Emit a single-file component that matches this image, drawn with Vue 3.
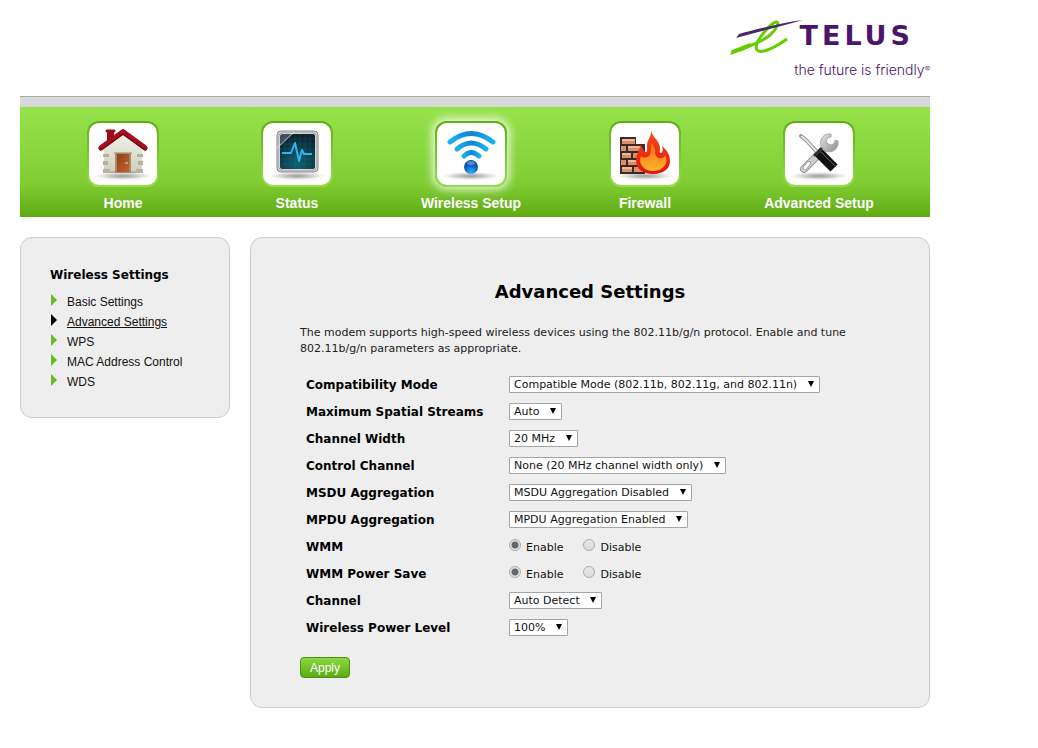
<script setup>
import { ref } from 'vue';

const onglets = [
  { id: 'home', label: 'Home' },
  { id: 'status', label: 'Status' },
  { id: 'wireless', label: 'Wireless Setup' },
  { id: 'firewall', label: 'Firewall' },
  { id: 'advanced', label: 'Advanced Setup' }
];
const ongletActif = ref('wireless');

const liens = ['Basic Settings', 'Advanced Settings', 'WPS', 'MAC Address Control', 'WDS'];
const lienActif = ref('Advanced Settings');

const champs = ref([
  { id: 'mode', label: 'Compatibility Mode', type: 'select', value: 'Compatible Mode (802.11b, 802.11g, and 802.11n)' },
  { id: 'streams', label: 'Maximum Spatial Streams', type: 'select', value: 'Auto' },
  { id: 'width', label: 'Channel Width', type: 'select', value: '20 MHz' },
  { id: 'control', label: 'Control Channel', type: 'select', value: 'None (20 MHz channel width only)' },
  { id: 'msdu', label: 'MSDU Aggregation', type: 'select', value: 'MSDU Aggregation Disabled' },
  { id: 'mpdu', label: 'MPDU Aggregation', type: 'select', value: 'MPDU Aggregation Enabled' },
  { id: 'wmm', label: 'WMM', type: 'radio', value: 'Enable' },
  { id: 'wmmps', label: 'WMM Power Save', type: 'radio', value: 'Enable' },
  { id: 'channel', label: 'Channel', type: 'select', value: 'Auto Detect' },
  { id: 'power', label: 'Wireless Power Level', type: 'select', value: '100%' }
]);
</script>

<template>
  <div class="page">
    <header class="header">
      <div class="logo">
        <div class="logo-top">
          <svg class="swoosh" viewBox="0 0 74 36" aria-hidden="true">
            <path d="M2 32 C18 27 32 22 40 15 C47 9 50 1 46 2 C41 3 31 15 28 21 C24 29 27 33 34 31 C43 29 50 24 57 19" fill="none" stroke="#66cc00" stroke-width="3" />
            <path d="M0 35 L2 30 L20 23 L22 26 C16 30 8 32 0 35Z" fill="#66cc00" />
            <path d="M9 14 C28 9 50 3 73 0 C52 6 28 12 6 18Z" fill="#4b286d" />
          </svg>
          <span class="logo-name">TELUS</span>
        </div>
        <span class="tagline">the future is friendly<span class="mark">®</span></span>
      </div>
    </header>

    <nav class="nav">
      <a v-for="o in onglets" :key="o.id" href="#" class="tab" @click.prevent="ongletActif = o.id">
        <span class="tile" :class="{ active: ongletActif === o.id }">
          <svg viewBox="0 0 68 62" aria-hidden="true">
            <defs>
              <radialGradient :id="'shadow-' + o.id">
                <stop offset="0" stop-color="#999" />
                <stop offset="0.5" stop-color="#999" stop-opacity="0.5" />
                <stop offset="1" stop-color="#999" stop-opacity="0" />
              </radialGradient>
            </defs>
            <ellipse cx="34" cy="53" rx="28" ry="4" :fill="'url(#shadow-' + o.id + ')'" />

            <g v-if="o.id === 'home'">
              <defs>
                <linearGradient id="wall" x1="0" y1="0" x2="0" y2="1">
                  <stop offset="0" stop-color="#f2f2ea" />
                  <stop offset="1" stop-color="#cfcfbd" />
                </linearGradient>
                <linearGradient id="door" x1="0" y1="0" x2="1" y2="1">
                  <stop offset="0" stop-color="#8f3f1c" />
                  <stop offset="1" stop-color="#c0622f" />
                </linearGradient>
              </defs>
              <path d="M18 7h7v11l-7 5z" fill="#9a0a19" />
              <path d="M18 8h7" stroke="#a00b1c" stroke-width="3" stroke-linecap="round" />
              <path d="M15 23 L34 9 L53 23 V50 H15Z" fill="url(#wall)" />
              <g fill="#b5b39a">
                <path d="M14 31h6v3h-6zM14 38h5v4h-5zM14 46h7v4h-7zM48 31h6v3h-6zM49 38h5v4h-5zM47 46h7v4h-7z" />
                <path d="M14 48h40v2H14zM25 29h18v2H25z" />
              </g>
              <path d="M26 30h16v20H26z" fill="#a88a64" />
              <path d="M28 31h12v18H28z" fill="url(#door)" />
              <path d="M36 40h3" stroke="#ffd98a" />
              <path d="M12 25 L34 9 L56 25" fill="none" stroke="#6e0712" stroke-width="5" stroke-linecap="round" stroke-linejoin="round" />
              <path d="M12 24 L34 8 L56 24" fill="none" stroke="#a80c1e" stroke-width="4" stroke-linecap="round" stroke-linejoin="round" />
            </g>

            <g v-else-if="o.id === 'status'">
              <defs>
                <radialGradient id="screen" cx="0.5" cy="0.85" r="0.8">
                  <stop offset="0" stop-color="#0e6272" />
                  <stop offset="1" stop-color="#0b2533" />
                </radialGradient>
              </defs>
              <rect x="14" y="8" width="41" height="41" rx="4" fill="#cfcfd2" stroke="#88888c" />
              <rect x="16" y="10" width="37" height="37" rx="3" fill="#fff" stroke="#a5a5aa" />
              <rect x="17" y="11" width="35" height="35" rx="2" fill="url(#screen)" />
              <path d="M22 11v35M27 11v35M32 11v35M37 11v35M42 11v35M47 11v35M17 16h35M17 21h35M17 26h35M17 31h35M17 36h35M17 41h35" stroke="#3b8b9b" stroke-opacity="0.15" />
              <path d="M17 11h13L17 23z" fill="#fff" fill-opacity="0.2" />
              <path d="M14 25L31 9" stroke="#fff" stroke-opacity="0.6" />
              <path d="M19 30h9l4-10 4 18 3-11 2 4h8" fill="none" stroke="#31b4ec" stroke-width="2" stroke-linejoin="round" />
            </g>

            <g v-else-if="o.id === 'wireless'">
              <defs>
                <linearGradient id="wave" x1="0" y1="0" x2="1" y2="0">
                  <stop offset="0" stop-color="#1cb1f2" />
                  <stop offset="0.5" stop-color="#0d83d6" />
                  <stop offset="1" stop-color="#1cb1f2" />
                </linearGradient>
                <radialGradient id="ball" cx="0.5" cy="0.9" r="0.9">
                  <stop offset="0" stop-color="#29b6f6" />
                  <stop offset="0.6" stop-color="#0a5cbe" />
                  <stop offset="1" stop-color="#07459e" />
                </radialGradient>
              </defs>
              <g fill="none" stroke="url(#wave)" stroke-width="5" stroke-linecap="round">
                <path d="M13 19 Q34 2 56 19" />
                <path d="M20 26 Q34 14 49 26" />
                <path d="M27 33 Q34 26 42 33" />
              </g>
              <circle cx="34" cy="44" r="7" fill="url(#ball)" />
              <ellipse cx="34" cy="40" rx="4" ry="2" fill="#fff" fill-opacity="0.3" />
            </g>

            <g v-else-if="o.id === 'firewall'">
              <defs>
                <linearGradient id="flame" x1="0" y1="0" x2="0" y2="1">
                  <stop offset="0" stop-color="#f5501e" />
                  <stop offset="1" stop-color="#e5120c" />
                </linearGradient>
                <linearGradient id="core" x1="0" y1="0" x2="0" y2="1">
                  <stop offset="0" stop-color="#ff6a13" />
                  <stop offset="1" stop-color="#ffb52c" />
                </linearGradient>
              </defs>
              <path d="M9 14h16v7h9v30H9z" fill="#3d2a24" />
              <g fill="#d98e6c">
                <path d="M11 16h13v5H11zM10 23h5v5h-5zM17 23h13v5H17zM11 30h9v5h-9zM22 30h9v5h-9zM10 37h5v5h-5zM17 37h13v5H17zM11 44h10v5H11zM23 44h9v5h-9z" />
              </g>
              <path d="M11 16h13v2H11zM17 23h13v2H17zM11 30h9v2h-9zM17 37h10v2H17zM11 44h10v2H11z" fill="#efb698" />
              <path d="M40 7 C41 14 49 18 49 25 C49 28 48 30 50 30 C52 30 52 26 51 23 C56 27 59 32 59 38 C59 46 52 51 42 51 C32 51 25 46 25 37 C25 31 29 28 29 22 C32 24 32 28 34 29 C37 30 36 26 36 23 C36 16 41 14 40 7Z" fill="url(#flame)" />
              <path d="M41 20 C43 24 44 25 44 29 C44 33 47 36 51 35 C54 34 54 33 54 32 C56 36 56 39 54 42 C51 47 46 48 42 48 C35 48 30 44 29 38 C29 35 30 34 30 33 C32 35 35 35 38 33 C41 30 39 25 41 20Z" fill="url(#core)" />
            </g>

            <g v-else>
              <defs>
                <linearGradient id="steel" x1="0" y1="0" x2="1" y2="1">
                  <stop offset="0" stop-color="#e6e6e6" />
                  <stop offset="1" stop-color="#8b8b8b" />
                </linearGradient>
              </defs>
              <path d="M19 46 L40 25" stroke="#999" stroke-width="8" stroke-linecap="round" />
              <path d="M19 46 L40 25" stroke="#cdcdcd" stroke-width="6" stroke-linecap="round" />
              <path d="M20 45 L24 40" stroke="#777" stroke-width="4" stroke-linecap="round" />
              <path d="M20 45 L24 40" stroke="#fff" stroke-width="3" stroke-linecap="round" />
              <path d="M46 11 C39 10 34 16 36 23 L40 28 C47 31 54 26 53 18 L50 17 C50 21 46 23 43 21 C40 18 42 14 46 14Z" fill="url(#steel)" stroke="#a5a5a5" />
              <path d="M16 13 L21 17 L33 30" fill="none" stroke="#909090" stroke-width="4" stroke-linejoin="round" stroke-linecap="round" />
              <path d="M16 13 L21 17 L33 30" fill="none" stroke="#e2e2e2" stroke-width="2" stroke-linejoin="round" />
              <path d="M30 32 L36 26" stroke="#2b2b2b" stroke-width="3" stroke-linecap="round" />
              <path d="M34 30 L49 45" stroke="#111" stroke-width="10" />
              <path d="M36 29 L51 44" stroke="#666" />
            </g>
          </svg>
        </span>
        <span class="tab-label">{{ o.label }}</span>
      </a>
    </nav>

    <div class="content">
      <aside class="panel sidebar">
        <h2 class="sidebar-title">Wireless Settings</h2>
        <ul class="menu">
          <li v-for="l in liens" :key="l" class="menu-item" :class="{ current: l === lienActif }">
            <a href="#" class="menu-link" @click.prevent="lienActif = l">{{ l }}</a>
          </li>
        </ul>
      </aside>

      <main class="panel main">
        <h1 class="title">Advanced Settings</h1>
        <p class="intro">
          The modem supports high-speed wireless devices using the 802.11b/g/n protocol. Enable and tune
          802.11b/g/n parameters as appropriate.
        </p>
        <form @submit.prevent>
          <div v-for="c in champs" :key="c.id" class="row">
            <template v-if="c.type === 'select'">
              <label class="row-label" :for="c.id">{{ c.label }}</label>
              <span class="select-wrap">
                <select :id="c.id" v-model="c.value" class="select">
                  <option>{{ c.value }}</option>
                </select>
              </span>
            </template>
            <template v-else>
              <span :id="c.id" class="row-label">{{ c.label }}</span>
              <div class="radios" role="radiogroup" :aria-labelledby="c.id">
                <label v-for="v in ['Enable', 'Disable']" :key="v" class="radio-label">
                  <input v-model="c.value" type="radio" class="radio" :name="c.id" :value="v" />
                  <span>{{ v }}</span>
                </label>
              </div>
            </template>
          </div>
          <button type="submit" class="apply">Apply</button>
        </form>
      </main>
    </div>
  </div>
</template>

<style>
body {
  margin: 0;
  background: #fff;
}
</style>

<style scoped>
.page {
  max-width: 910px;
  padding: 0 20px 40px;
  font-family: Verdana, "DejaVu Sans", sans-serif;
  font-size: 11px;
  color: #000;
}

.header {
  display: flex;
  justify-content: flex-end;
  padding: 20px 0 17px;
}

.logo {
  display: flex;
  flex-direction: column;
  align-items: flex-end;
  color: #4b146d;
}

.logo-top {
  display: flex;
  align-items: flex-start;
  padding-right: 16px;
}

.swoosh {
  width: 74px;
  height: 36px;
  margin-right: -4px;
}

.logo-name {
  font: bold 27px/32px "DejaVu Sans", sans-serif;
  letter-spacing: 4px;
}

.tagline {
  margin-top: 4px;
  font: 300 14px/20px Inter, "Liberation Sans", sans-serif;
}

.mark {
  font-size: 8px;
  line-height: 8px;
  vertical-align: 3px;
}

.nav {
  display: flex;
  padding: 14px 24px 4px 16px;
  border-top: 10px solid #d8d8d8;
  box-shadow: 0 -1px #aaa;
  background: linear-gradient(#98e34b, #7fcc33 70%, #5faa12);
}

.tab {
  flex: 1;
  display: flex;
  flex-direction: column;
  align-items: center;
  gap: 6px;
  text-decoration: none;
}

.tile {
  padding: 2px;
  border-radius: 12px;
  background: linear-gradient(#5fae17, #93df4c);
}

.tile.active {
  box-shadow: 0 0 8px 3px rgba(255, 255, 255, 0.8);
}

.tile svg {
  display: block;
  width: 68px;
  height: 62px;
  border-radius: 10px;
  background: #fff;
}

.tab-label {
  font: bold 14px/20px Arial, "Liberation Sans", sans-serif;
  color: #fff;
}

.content {
  display: flex;
  align-items: flex-start;
  gap: 20px;
  margin-top: 20px;
}

.panel {
  box-sizing: border-box;
  border: 1px solid #ccc;
  border-radius: 12px;
  background: #eee;
}

.sidebar {
  flex: 0 0 210px;
  padding: 27px 20px 25px 29px;
}

.sidebar-title {
  margin: 0 0 7px;
  font-size: 12px;
  line-height: 20px;
}

.menu {
  margin: 0;
  padding: 0;
  list-style: none;
}

.menu-item {
  display: flex;
  gap: 10px;
  line-height: 20px;
}

.menu-item::before {
  content: "";
  width: 0;
  height: 0;
  margin: 2px 0 0 1px;
  border: 6px solid transparent;
  border-left-color: #66bb22;
  border-right-width: 0;
}

.menu-item.current::before {
  border-left-color: #000;
}

.menu-link {
  font: 12px/20px Arial, "Liberation Sans", sans-serif;
  color: #111;
  text-decoration: none;
}

.current .menu-link {
  text-decoration: underline;
}

.main {
  flex: 1;
  padding: 42px 49px 29px;
}

.title {
  margin: 0 0 21px;
  font-size: 18px;
  line-height: 24px;
  text-align: center;
}

.intro {
  margin: 0 0 14px;
  line-height: 16px;
  color: #222;
}

.row {
  display: flex;
  align-items: center;
  height: 27px;
  padding-left: 6px;
}

.row-label {
  flex: 0 0 203px;
  font-size: 12px;
  font-weight: bold;
}

.select-wrap {
  position: relative;
}

.select-wrap::after {
  content: "";
  position: absolute;
  top: 5px;
  right: 6px;
  border: 3px solid transparent;
  border-top: 6px solid #000;
  border-bottom: 0;
  pointer-events: none;
}

.select {
  display: block;
  appearance: none;
  height: 17px;
  margin: 0;
  padding: 1px 21px 0 4px;
  border: 1px solid #a5a5a5;
  border-radius: 1px;
  background: #fff;
  font: inherit;
  line-height: 14px;
  color: #111;
}

.radios {
  display: flex;
  gap: 20px;
}

.radio-label {
  display: flex;
  gap: 5px;
  padding-top: 2px;
  line-height: 16px;
  color: #111;
}

.radio {
  appearance: none;
  box-sizing: border-box;
  width: 12px;
  height: 12px;
  margin: -1px 0 0;
  border: 1px solid #aaa;
  border-radius: 50%;
  background: linear-gradient(#e8e8e8, #dcdcdc);
}

.radio:checked {
  background: radial-gradient(circle, #666 3px, #e4e4e4 4px);
}

.apply {
  display: block;
  height: 21px;
  margin-top: 16px;
  padding: 0 9px;
  border: 1px solid #4c9010;
  border-radius: 4px;
  background: linear-gradient(#8bd941, #5cab14);
  font: 12px/18px Arial, "Liberation Sans", sans-serif;
  color: #fff;
  cursor: pointer;
}
</style>
